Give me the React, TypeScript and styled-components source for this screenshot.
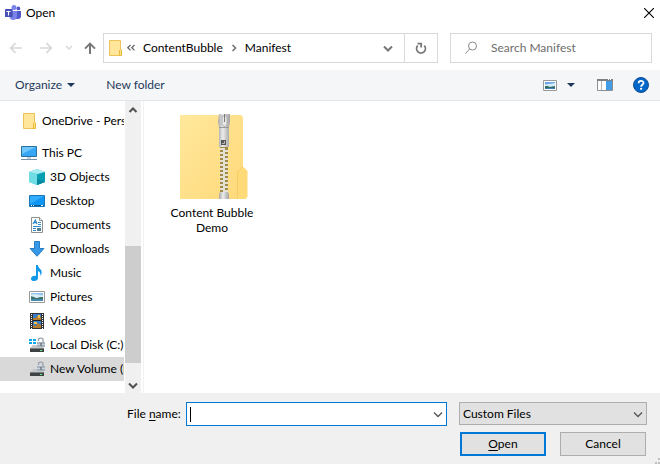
import React from "react";
import styled, { createGlobalStyle, css } from "styled-components";

const GlobalStyle = createGlobalStyle`
  *, *::before, *::after { box-sizing: border-box; }
  body { margin: 0; background: #fff; }
  body, button, input, select {
    font-family: Lato, "Open Sans", sans-serif;
    font-size: 12px;
    line-height: 16px;
    color: #000;
  }
  button { padding: 0; border: 0; background: none; }
  svg { display: block; flex: none; }
  u { text-underline-offset: 2px; }
`;

const Dialog = styled.main`
  display: flex;
  flex-direction: column;
  min-height: 100vh;
  background: #fff;
`;

const TitleBar = styled.header`
  display: flex;
  align-items: center;
  height: 25px;
  padding: 0 5px;
  gap: 5px;
`;

const Title = styled.h1`
  flex: 1;
  margin: 0;
  font-size: 12px;
  font-weight: 400;
`;

const IconButton = styled.button<{ $width?: number }>`
  display: flex;
  align-items: center;
  justify-content: center;
  width: ${(p) => p.$width ?? 16}px;
  height: 16px;
`;

const NavRow = styled.nav`
  display: flex;
  align-items: center;
  margin-top: 8px;
  padding: 0 8px;
`;

const Arrows = styled.div`
  display: flex;
  align-items: center;
  width: 95px;
`;

const Arrow = styled(IconButton)<{ $gap?: number }>`
  margin-right: ${(p) => p.$gap ?? 0}px;
`;

const Address = styled.div`
  display: flex;
  align-items: center;
  flex: 1;
  height: 30px;
  margin-right: 12px;
  padding-left: 3px;
  border: 1px solid #d9d9d9;
`;

const Crumb = styled.button`
  padding: 0 7px;
  white-space: nowrap;
`;

const AddressToggle = styled(IconButton)`
  margin-left: auto;
`;

const Refresh = styled(IconButton)`
  height: 28px;
  border-left: 1px solid #d9d9d9;
`;

const Search = styled.label`
  display: flex;
  align-items: center;
  width: 202px;
  height: 30px;
  padding-left: 14px;
  gap: 14px;
  border: 1px solid #d9d9d9;
`;

const SearchInput = styled.input`
  flex: 1;
  min-width: 0;
  padding: 0;
  border: 0;
  outline: 0;
  &::placeholder { color: #6d6d6d; opacity: 1; }
`;

const Toolbar = styled.div`
  display: flex;
  align-items: center;
  height: 31px;
  margin-top: 7px;
  padding: 0 11px 0 15px;
  background: #f5f6f7;
  border-bottom: 1px solid #e4e5e7;
`;

const Command = styled.button`
  display: flex;
  align-items: center;
  gap: 5px;
  margin-right: 31px;
  color: #1e395b;
`;

const ToolIcons = styled.div`
  display: flex;
  align-items: center;
  margin-left: auto;
  gap: 20px;
`;

const ViewGroup = styled.div`
  display: flex;
  gap: 5px;
  margin-right: -2px;
`;

const Body = styled.div`
  display: flex;
  flex: 1;
`;

const Sidebar = styled.aside`
  display: flex;
  width: 144px;
  padding-right: 2px;
  border-right: 1px solid #f2f2f2;
`;

const Tree = styled.ul`
  flex: 1;
  min-width: 0;
  margin: 0 1px 0 0;
  padding: 8px 0 12px;
  list-style: none;
  overflow: hidden;
`;

const TreeRow = styled.li<{ $child?: boolean; $selected?: boolean; $spaced?: boolean }>`
  display: flex;
  align-items: center;
  height: 24px;
  padding-left: ${(p) => (p.$child ? 29 : 21)}px;
  gap: 5px;
  white-space: nowrap;
  ${(p) => p.$spaced && css`margin-bottom: 8px;`}
  ${(p) => p.$selected && css`background: #d9d9d9;`}
`;

const ScrollBar = styled.div`
  display: flex;
  flex-direction: column;
  width: 16px;
  background: #f0f0f0;
`;

const ScrollButton = styled(IconButton)`
  height: 17px;
`;

const Track = styled.div`
  display: flex;
  flex: 1;
  flex-direction: column;
  &::before { content: ""; flex: 128; }
  &::after { content: ""; flex: 13; }
`;

const Thumb = styled.div`
  flex: 117;
  background: #cdcdcd;
`;

const Files = styled.section`
  flex: 1;
  padding: 12px 16px;
`;

const FileTile = styled.button`
  display: flex;
  flex-direction: column;
  align-items: center;
  width: 104px;
  gap: 6px;
  line-height: 15px;
`;

const Footer = styled.form`
  display: flex;
  flex-direction: column;
  height: 71px;
  padding: 9px 13px 0 127px;
  gap: 6px;
  background: #f0f0f0;
  position: relative;
`;

const FieldRow = styled.div`
  display: flex;
  align-items: flex-start;
`;

const FieldLabel = styled.label`
  width: 59px;
  line-height: 24px;
  white-space: nowrap;
`;

const Combo = styled.div`
  display: flex;
  align-items: center;
  flex: 1;
  height: 24px;
  margin-right: 12px;
  padding-left: 3px;
  border: 1px solid #0078d7;
  background: #fff;
`;

const Caret = styled.span`
  width: 1px;
  height: 15px;
  background: #000;
`;

const NameInput = styled.input`
  flex: 1;
  min-width: 0;
  height: 20px;
  padding: 0;
  border: 0;
  outline: 0;
`;

const SelectBox = styled.div`
  display: grid;
  align-items: center;
  width: 188px;
  & > * { grid-area: 1 / 1; }
  & > svg { justify-self: end; margin-right: 1px; pointer-events: none; }
`;

const FilterSelect = styled.select`
  appearance: none;
  height: 23px;
  padding: 0 20px 0 3px;
  border: 1px solid #adadad;
  border-radius: 0;
  background: #e1e1e1;
`;

const ButtonRow = styled.div`
  display: flex;
  justify-content: flex-end;
  gap: 14px;
  padding-right: 1px;
`;

const PushButton = styled.button<{ $primary?: boolean }>`
  width: 86px;
  height: 24px;
  border: ${(p) => (p.$primary ? "2px solid #0078d7" : "1px solid #adadad")};
  background: #e1e1e1;
`;

const Grip = styled.svg`
  position: absolute;
  right: 0;
  bottom: 0;
`;

const Chevron = ({ color = "#777", up = false, width = 2 }: { color?: string; up?: boolean; width?: number }) => (
  <svg width="16" height="16" viewBox="0 0 16 16" fill="none" stroke={color} strokeWidth={width}>
    <path d={up ? "M4.5 10 8 6.5 11.5 10" : "M4 6.5 8 10.5 12 6.5"} />
  </svg>
);

const TeamsIcon = () => (
  <svg width="16" height="16" viewBox="0 0 16 16">
    <circle cx="13.4" cy="3.4" r="1.9" fill="#5059c9" />
    <circle cx="9" cy="2.6" r="2.5" fill="#7b83eb" />
    <path d="M11 6h5v5.2c0 1.6-1.3 2.8-2.8 2.8H11z" fill="#5059c9" />
    <path d="M4.5 6H12v5c0 2.5-1.6 4-3.8 4S4.500 13.500 4.500 11z" fill="#7b83eb" />
    <path d="M5 4h3v8H5z" fill="#4046a8" opacity=".55" />
    <rect y="4" width="7" height="8" rx=".6" fill="#464eb8" />
    <path d="M1.500 6.500h4M3.500 6.500v4" stroke="#fff" strokeWidth="1.100" />
  </svg>
);

const BackIcon = ({ flip = false }: { flip?: boolean }) => (
  <svg width="16" height="16" viewBox="0 0 16 16" fill="none" stroke="#d8d8d8" strokeWidth="1.7">
    <path d={flip ? "M2 8h11M8.5 3.2 13.3 8 8.5 12.8" : "M14 8H3M7.5 3.2 2.7 8l4.8 4.8"} />
  </svg>
);

const UpIcon = () => (
  <svg width="16" height="16" viewBox="0 0 16 16" fill="none" stroke="#777" strokeWidth="2">
    <path d="M8 14V4M3 8.600 8 3.600l5 5" />
  </svg>
);

const FolderIcon = () => (
  <svg width="16" height="16" viewBox="0 0 16 16">
    <path d="M2.5.5h11V9l1 .8v5.7h-12z" fill="#ffe69a" stroke="#ecc355" />
    <path d="M12.5 15.5v-5l1-1 1 1v5z" fill="#ffe28a" stroke="#e8b93c" />
  </svg>
);

const DoubleLeft = () => (
  <svg width="13" height="16" viewBox="0 0 13 16" fill="none" stroke="#666" strokeWidth="1.3">
    <path d="M7.5 5 4.8 7.7l2.7 2.7M11.5 5 8.8 7.7l2.7 2.7" />
  </svg>
);

const RightChevron = () => (
  <svg width="8" height="16" viewBox="0 0 8 16" fill="none" stroke="#777" strokeWidth="1.7">
    <path d="M2.500 5 5.500 8l-3 3" />
  </svg>
);

const RefreshIcon = () => (
  <svg width="16" height="16" viewBox="0 0 16 16" fill="none" stroke="#777" strokeWidth="1.800">
    <path d="M4.700 5.700A4.400 4.400 0 1 0 11.300 5.700" />
    <path d="M4.500 3.600h3.700v4" />
  </svg>
);

const SearchIcon = () => (
  <svg width="12" height="14" viewBox="0 0 12 14" fill="none" stroke="#8a8a8a" strokeWidth="1">
    <circle cx="7.5" cy="5" r="4" />
    <path d="M4.7 7.9.4 12.6" />
  </svg>
);

const CloseIcon = () => (
  <svg width="10" height="10" viewBox="0 0 10 10" stroke="#000" strokeWidth="1.1">
    <path d="m0 0 10 10M10 0 0 10" />
  </svg>
);

const DropTriangle = () => (
  <svg width="8" height="4" viewBox="0 0 8 4">
    <path d="M0 0h8L4 4z" fill="#1e395b" />
  </svg>
);

const PictureIcon = () => (
  <svg width="16" height="16" viewBox="0 0 16 16">
    <path d="M.5 2.5h15v11H.5z" fill="#fff" stroke="#999" />
    <path d="M2 4h12v8H2z" fill="#8fc1ee" />
    <path d="M2 5.5 6 5l8 1.4V9H2z" fill="#d9edf8" />
    <path d="M2 7.2c2 0 3.5 1.2 5.4 2 2-.6 4-1.2 6.6-1.2V10H2z" fill="#3c7167" />
    <path d="M2 10h12v2H2z" fill="#4588ad" />
  </svg>
);

const ViewIcon = () => (
  <svg width="14" height="11" viewBox="0 0 14 11">
    <path d="M.5.5h13v10H.5z" fill="#fff" stroke="#999" />
    <path d="M2 2h10v7H2z" fill="#6aa6e8" />
    <path d="M2 4.5 6 4l6-1v3L7 7H2z" fill="#d6ebf8" />
    <path d="M2 6c2-.3 4 .4 5 1l5-.8V8H2z" fill="#326b62" />
    <path d="M2 8h10v1H2z" fill="#4380ad" />
  </svg>
);

const PaneIcon = () => (
  <svg width="16" height="12" viewBox="0 0 16 12">
    <path d="M.5.5h15v11H.5z" fill="#fff" stroke="#8b8f94" />
    <path d="M0 0h16v2H0z" fill="#7b8085" />
    <path d="M4.5 2v9" stroke="#b5b5b5" />
    <path d="M9 2h6v9H9z" fill="#429ce3" />
    <path d="M11 .5h1M13 .5h1" stroke="#fff" />
  </svg>
);

const HelpIcon = () => (
  <svg width="16" height="16" viewBox="0 0 16 16">
    <circle cx="8" cy="8" r="7.500" fill="#0067c8" stroke="#174f91" />
    <path d="M5.600 6.200C5.600 3 10.500 3.200 10.500 5.900c0 1.800-2.400 1.900-2.400 3.900" fill="none" stroke="#fff" strokeWidth="1.800" />
    <path d="M7.100 10.900h2v1.800h-2z" fill="#fff" />
  </svg>
);

const ComputerIcon = () => (
  <svg width="16" height="16" viewBox="0 0 16 16">
    <path d="M.5 1.5h15v10H.5z" fill="#35a7f4" stroke="#2b6f9e" />
    <path d="M1 2h14L1 9z" fill="#70c7fb" />
    <path d="M6 12h4v2H6z" fill="#c5d3dd" />
    <path d="M0 14.500h16" stroke="#7892a5" />
  </svg>
);

const CubeIcon = () => (
  <svg width="16" height="16" viewBox="0 0 16 16">
    <path d="m0 3 8-3 8 3v10l-8 3-8-3z" fill="#42cfdc" />
    <path d="m0 3 8-3 8 3-8 2z" fill="#a9ecf0" />
    <path d="m0 3 8 2.500V16l-8-3z" fill="#70dce4" />
    <path d="M8 5.500 16 3v10l-8 3z" fill="#079eb2" />
    <path d="m8 10 8 3-8 3z" fill="#0788a0" />
  </svg>
);

const DesktopIcon = () => (
  <svg width="16" height="16" viewBox="0 0 16 16">
    <path d="M.5 2.5h15v11H.5z" fill="#0f96f4" stroke="#1675b8" />
    <path d="M1 3h14L1 11z" fill="#32acfc" />
    <path d="M1 12.5h14" stroke="#085993" />
    <path d="M2 12.5h1M4 12.5h1M12 12.5h2" stroke="#fff" />
  </svg>
);

const DocumentIcon = () => (
  <svg width="16" height="16" viewBox="0 0 16 16">
    <path d="M2.5.5h8l3 3v12h-11z" fill="#fff" stroke="#909090" />
    <path d="M10.5.5v3h3" fill="#eee" stroke="#909090" />
    <path d="m4 7 2.400-4L8 7M5 5.700h2.500" fill="none" stroke="#2c86c9" strokeWidth="1.200" />
    <path d="M9 5.500h3M9 7.500h3M4 9.500h8M4 11.500h3M4 13.500h3" stroke="#318bd0" />
    <path d="M8 11h4v3H8z" fill="#507e90" />
  </svg>
);

const DownloadIcon = () => (
  <svg width="16" height="16" viewBox="0 0 16 16">
    <path d="M5.500.5h5v7h4.400L8 15.300 1.100 7.500h4.400z" fill="#3798e8" stroke="#267bc2" />
  </svg>
);

const MusicIcon = () => (
  <svg width="16" height="16" viewBox="0 0 16 16">
    <path d="M7 0h2c0 3.400 4 3.800 3.700 7.700-.1 1.200-.7 2.500-1.400 3.300.5-2.800-.4-4.300-2.300-5V13c0 2-1.700 3-3.700 3S2 15.200 2 13.700c0-2.100 2.800-3.400 5-2.700z" fill="#1299eb" />
  </svg>
);

const VideoIcon = () => (
  <svg width="16" height="16" viewBox="0 0 16 16">
    <path d="M1 0h14v16H1z" fill="#333" />
    <path d="M2.500 1v15M13.500 1v15" stroke="#fff" strokeDasharray="1 1" />
    <path d="M4 1h8v6H4zM4 8h8v7H4z" fill="#397dca" />
    <path d="M4 5h3l1-2 4 1v3H4zM4 12l3 1 1-3 4 2v3H4z" fill="#b37d2f" />
    <path d="M9 2h2v3H9zM5 9h3v2H5z" fill="#f1c448" />
    <path d="M4 7.500h8" stroke="#222" />
  </svg>
);

const DriveIcon = ({ system = false }: { system?: boolean }) => (
  <svg width="16" height="16" viewBox="0 0 16 16">
    <path d="M4 8h9l2 3H1z" fill="#c4c7c9" />
    <path d="M1 11h14v4H1z" fill="#3e4245" />
    <path d="M1 11.500h14" stroke="#777c7f" />
    <path d="M11 13h2v1h-2z" fill="#5ff27d" />
    <path d="M9.500 4V2.500C9.500.7 14 .7 14 2.500V5" fill="none" stroke="#9aa5ae" strokeWidth="1.400" />
    <path d="M8 5h8v5H8z" fill="#a4b3bf" />
    <path d="M8 7.500h8" stroke="#c9d2d8" />
    <path d="M12 6v3" stroke="#4e5960" />
    {system && <path d="M0 2h3v2H0zM4 2h3v2H4zM0 5h3v2H0zM4 5h3v2H4z" fill="#08a9ed" />}
  </svg>
);

const teeth = Array.from({ length: 11 }, (_, i) => 35 + i * 4);

const ZipFolder = () => (
  <svg width="72" height="86" viewBox="0 0 72 86">
    <defs>
      <linearGradient id="folder" x2="1" y2="1">
        <stop stopColor="#ffe89c" />
        <stop offset="1" stopColor="#ffd97a" />
      </linearGradient>
      <linearGradient id="metal">
        <stop stopColor="#a5a5a5" />
        <stop offset=".4" stopColor="#ececec" />
        <stop offset="1" stopColor="#a2a2a2" />
      </linearGradient>
    </defs>
    <path d="M4 2h61l2 2v80l-2 2H4z" fill="url(#folder)" />
    <path d="M61.500 86V59l5-5h1l4 4v26l-2 2z" fill="#ffda79" />
    <path d="M61.500 86V59l5-5" fill="none" stroke="#f6cc66" />
    <path d="M44 34h8v46h-8z" fill="#a08a45" />
    {teeth.map((y) => (
      <path key={y} d={`M44 ${y}h5v2h-5zM47 ${y + 2}h5v2h-5z`} fill="#e4e1d2" />
    ))}
    <path d="M43 1h11v8l-1 5v20H43V14l-1-5z" fill="url(#metal)" />
    <path d="M43 14.500h10" stroke="#999" />
    <path d="M46 3h5v9q-2.500 3-5 0z" fill="#e8e8e8" stroke="#999" strokeWidth=".7" />
    <path d="M48 1h1v8h-1z" fill="#777" />
    <path d="M45 27h5v5h-5z" fill="#555" />
    <path d="M46 30.500h2.500V28" fill="none" stroke="#bbb" />
    <path d="M44 79h8l1 3v4H43v-4z" fill="url(#metal)" />
  </svg>
);

const places = [
  { label: "3D Objects", icon: <CubeIcon /> },
  { label: "Desktop", icon: <DesktopIcon /> },
  { label: "Documents", icon: <DocumentIcon /> },
  { label: "Downloads", icon: <DownloadIcon /> },
  { label: "Music", icon: <MusicIcon /> },
  { label: "Pictures", icon: <PictureIcon /> },
  { label: "Videos", icon: <VideoIcon /> },
  { label: "Local Disk (C:)", icon: <DriveIcon system /> },
  { label: "New Volume (D:)", icon: <DriveIcon />, selected: true },
];

export default function App() {
  return (
    <>
      <GlobalStyle />
      <Dialog>
        <TitleBar>
          <TeamsIcon />
          <Title>Open</Title>
          <IconButton aria-label="Close" $width={12}><CloseIcon /></IconButton>
        </TitleBar>
        <NavRow>
          <Arrows>
            <Arrow aria-label="Back" disabled $gap={14}><BackIcon /></Arrow>
            <Arrow aria-label="Forward" disabled $gap={7}><BackIcon flip /></Arrow>
            <Arrow aria-label="Recent locations" $gap={3}>
              <svg width="8" height="8" viewBox="0 0 8 8" fill="none" stroke="#d8d8d8" strokeWidth="1.5"><path d="m1 2 3 3 3-3" /></svg>
            </Arrow>
            <Arrow aria-label="Up" $width={20}><UpIcon /></Arrow>
          </Arrows>
          <Address>
            <FolderIcon />
            <DoubleLeft />
            <Crumb>ContentBubble</Crumb>
            <RightChevron />
            <Crumb>Manifest</Crumb>
            <AddressToggle aria-label="Previous locations" $width={32}><Chevron /></AddressToggle>
            <Refresh aria-label="Refresh" $width={33}><RefreshIcon /></Refresh>
          </Address>
          <Search>
            <SearchIcon />
            <SearchInput type="search" placeholder="Search Manifest" aria-label="Search Manifest" />
          </Search>
        </NavRow>
        <Toolbar>
          <Command>Organize <DropTriangle /></Command>
          <Command>New folder</Command>
          <ToolIcons>
            <ViewGroup>
              <IconButton aria-label="Change view"><ViewIcon /></IconButton>
              <IconButton aria-label="More view options"><DropTriangle /></IconButton>
            </ViewGroup>
            <IconButton aria-label="Preview pane"><PaneIcon /></IconButton>
            <IconButton aria-label="Help"><HelpIcon /></IconButton>
          </ToolIcons>
        </Toolbar>
        <Body>
          <Sidebar>
            <Tree>
              <TreeRow $spaced><FolderIcon />OneDrive - Personal</TreeRow>
              <TreeRow><ComputerIcon />This PC</TreeRow>
              {places.map((p) => (
                <TreeRow key={p.label} $child $selected={p.selected}>{p.icon}{p.label}</TreeRow>
              ))}
            </Tree>
            <ScrollBar>
              <ScrollButton aria-label="Scroll up"><Chevron up color="#505050" /></ScrollButton>
              <Track><Thumb /></Track>
              <ScrollButton aria-label="Scroll down"><Chevron color="#505050" /></ScrollButton>
            </ScrollBar>
          </Sidebar>
          <Files>
            <FileTile>
              <ZipFolder />
              <span>Content Bubble<br />Demo</span>
            </FileTile>
          </Files>
        </Body>
        <Footer onSubmit={(e) => e.preventDefault()}>
          <FieldRow>
            <FieldLabel htmlFor="file-name">File <u>n</u>ame:</FieldLabel>
            <Combo>
              <Caret />
              <NameInput id="file-name" />
              <IconButton type="button" aria-label="Recent file names"><Chevron color="#555" width={1.3} /></IconButton>
            </Combo>
            <SelectBox>
              <FilterSelect aria-label="File type" defaultValue="custom">
                <option value="custom">Custom Files</option>
              </FilterSelect>
              <Chevron color="#555" width={1.3} />
            </SelectBox>
          </FieldRow>
          <ButtonRow>
            <PushButton type="submit" $primary><u>O</u>pen</PushButton>
            <PushButton type="button">Cancel</PushButton>
          </ButtonRow>
          <Grip width="6" height="6" viewBox="0 0 6 6" aria-hidden="true">
            <path d="M4 0h2v2H4zM4 4h2v2H4zM1 4h2v2H1z" fill="#bfbfbf" />
          </Grip>
        </Footer>
      </Dialog>
    </>
  );
}
